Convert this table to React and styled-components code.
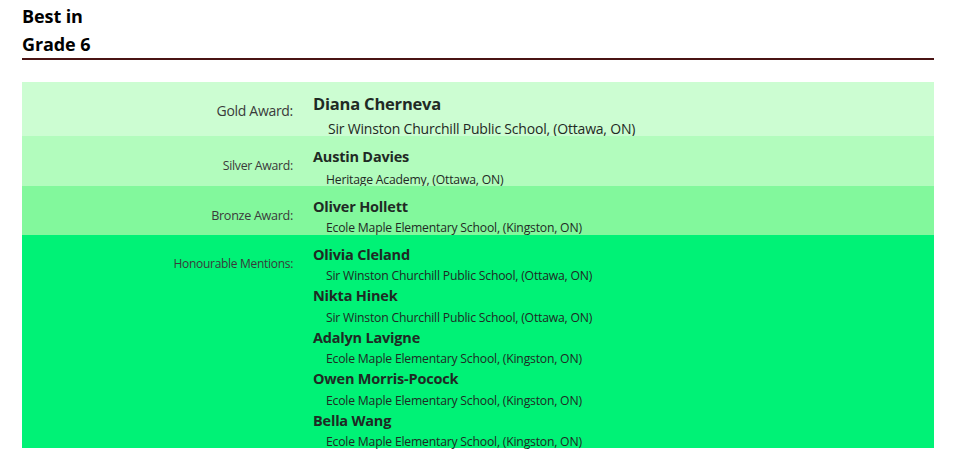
import React from 'react';
import styled, { createGlobalStyle } from 'styled-components';

const GlobalStyle = createGlobalStyle`
  html, body {
    margin: 0;
    padding: 0;
    background: #fff;
  }
  body {
    font-family: 'Open Sans', 'Noto Sans', sans-serif;
  }
`;

const Page = styled.div`
  width: 980px;
  height: 463px;
  overflow: hidden;
  box-sizing: border-box;
  padding: 2px 46px 0 22px;
`;

const Title = styled.h2`
  margin: 0;
  font-size: 18px;
  line-height: 28px;
  font-weight: 700;
  color: #000;
  letter-spacing: -0.1px;
  border-bottom: 2px solid #4a1414;
`;

const Panel = styled.div`
  margin-top: 22px;
  display: flex;
  flex-direction: column;
  height: 366px;
  background: #00f276;
`;

const Row = styled.div`
  display: grid;
  grid-template-columns: 271px 1fr;
  column-gap: 20px;
  background: ${p => p.$bg};
  height: ${p => p.$height}px;
  box-sizing: border-box;
  padding-top: ${p => p.$pad}px;
  flex: ${p => (p.$grow ? '1' : 'none')};
`;

const Label = styled.div`
  text-align: right;
  font-size: ${p => p.$size}px;
  line-height: 18px;
  color: #3a3a3a;
  padding-top: ${p => p.$offset}px;
  letter-spacing: -0.3px;
`;

const Entries = styled.div`
  display: flex;
  flex-direction: column;
`;

const Name = styled.div`
  font-weight: 700;
  font-size: ${p => (p.$big ? 16.5 : 14.5)}px;
  line-height: ${p => (p.$big ? 22 : 20)}px;
  color: #1f2a24;
  letter-spacing: -0.2px;
`;

const School = styled.div`
  font-size: ${p => (p.$big ? 14 : 12.2)}px;
  line-height: ${p => (p.$big ? 18 : 19.75)}px;
  margin-top: ${p => p.$gap}px;
  padding-left: ${p => (p.$big ? 15 : 13)}px;
  color: #1f2a24;
  letter-spacing: -0.2px;
`;

const rows = [
  {
    label: 'Gold Award:',
    bg: '#ccfdd2',
    height: 54,
    pad: 11,
    labelSize: 14,
    offset: 9,
    gap: 5,
    big: true,
    entries: [['Diana Cherneva', 'Sir Winston Churchill Public School, (Ottawa, ON)']],
  },
  {
    label: 'Silver Award:',
    bg: '#b2fcbd',
    height: 50,
    pad: 10.5,
    labelSize: 12.3,
    offset: 10.5,
    gap: 3.4,
    entries: [['Austin Davies', 'Heritage Academy, (Ottawa, ON)']],
  },
  {
    label: 'Bronze Award:',
    bg: '#82f89c',
    height: 49,
    pad: 10.5,
    labelSize: 12.6,
    offset: 10,
    gap: 1.9,
    entries: [['Oliver Hollett', 'Ecole Maple Elementary School, (Kingston, ON)']],
  },
  {
    label: 'Honourable Mentions:',
    bg: '#00f276',
    height: 213,
    pad: 9.5,
    labelSize: 12,
    offset: 10,
    gap: 1.75,
    grow: true,
    entries: [
      ['Olivia Cleland', 'Sir Winston Churchill Public School, (Ottawa, ON)'],
      ['Nikta Hinek', 'Sir Winston Churchill Public School, (Ottawa, ON)'],
      ['Adalyn Lavigne', 'Ecole Maple Elementary School, (Kingston, ON)'],
      ['Owen Morris-Pocock', 'Ecole Maple Elementary School, (Kingston, ON)'],
      ['Bella Wang', 'Ecole Maple Elementary School, (Kingston, ON)'],
    ],
  },
];

export default function App() {
  return (
    <Page>
      <GlobalStyle />
      <Title>
        Best in
        <br />
        Grade 6
      </Title>
      <Panel>
        {rows.map(r => (
          <Row key={r.label} $bg={r.bg} $height={r.height} $pad={r.pad} $grow={r.grow}>
            <Label $size={r.labelSize} $offset={r.offset}>
              {r.label}
            </Label>
            <Entries>
              {r.entries.map(([name, school]) => (
                <React.Fragment key={name}>
                  <Name $big={r.big}>{name}</Name>
                  <School $big={r.big} $gap={r.gap}>
                    {school}
                  </School>
                </React.Fragment>
              ))}
            </Entries>
          </Row>
        ))}
      </Panel>
    </Page>
  );
}
